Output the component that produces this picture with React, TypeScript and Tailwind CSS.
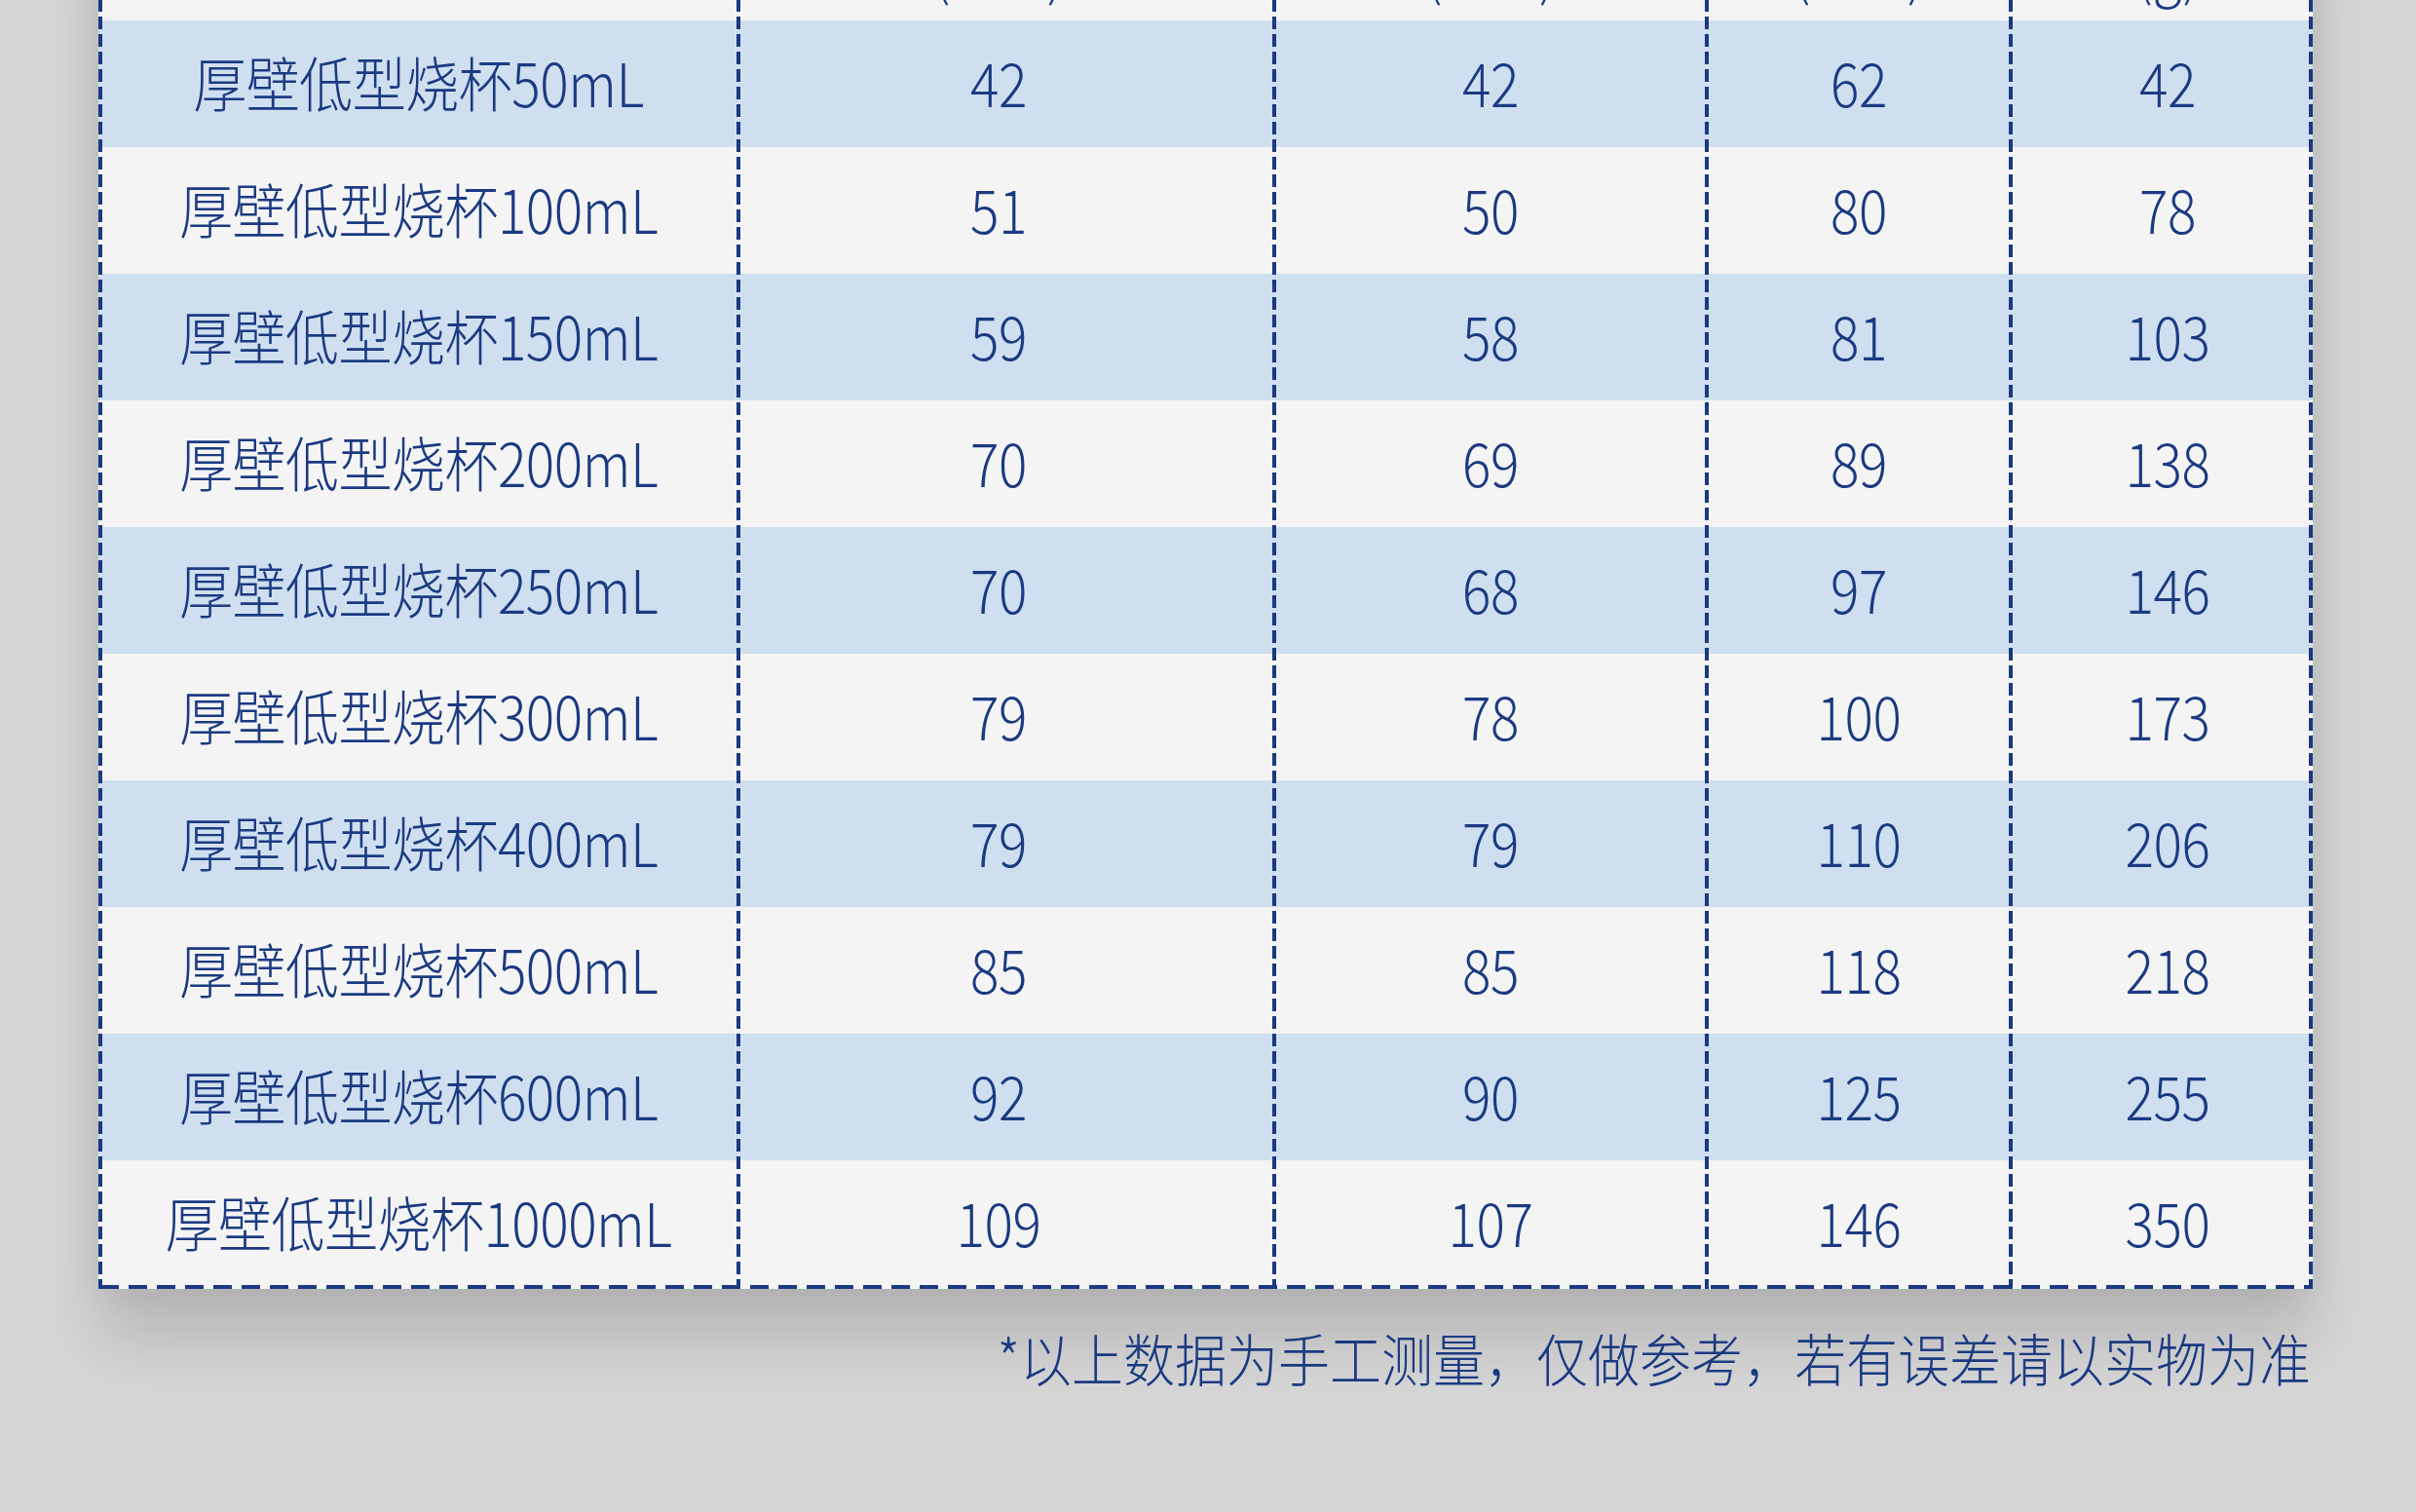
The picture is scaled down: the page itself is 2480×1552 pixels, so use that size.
import React from "react";

const rows: string[][] = [
  ["厚壁低型烧杯50mL", "42", "42", "62", "42"],
  ["厚壁低型烧杯100mL", "51", "50", "80", "78"],
  ["厚壁低型烧杯150mL", "59", "58", "81", "103"],
  ["厚壁低型烧杯200mL", "70", "69", "89", "138"],
  ["厚壁低型烧杯250mL", "70", "68", "97", "146"],
  ["厚壁低型烧杯300mL", "79", "78", "100", "173"],
  ["厚壁低型烧杯400mL", "79", "79", "110", "206"],
  ["厚壁低型烧杯500mL", "85", "85", "118", "218"],
  ["厚壁低型烧杯600mL", "92", "90", "125", "255"],
  ["厚壁低型烧杯1000mL", "109", "107", "146", "350"],
];

const header = ["", "(mm)", "(mm)", "(mm)", "(g)"];
const lineLefts = [0, 655, 1205, 1649, 1961, 2269];
const cellPad = ["", "pr-[16px]", "", "", "pl-[12px]"];

export default function App() {
  return (
    <div className="w-[2480px] h-[1552px] overflow-hidden bg-[#d6d6d6] font-['Noto_Sans_CJK_SC','Noto_Sans',sans-serif] text-[#1b3a82]">
      <div className="ml-[101px] w-[2273px] -mt-[109px] relative bg-[#f4f4f4] shadow-[0_55px_60px_rgba(0,0,0,0.14),0_0_35px_rgba(0,0,0,0.07)]">
        <div className="grid grid-cols-[657px_550px_444px_312px_310px] h-[130px] bg-[#f4f4f4]">
          {header.map((h, i) => (
            <div key={i} className={"flex items-end justify-center pb-[26px] " + cellPad[i]}>
              <span className="inline-block text-[55px] leading-none font-light scale-y-[1.12]">{h}</span>
            </div>
          ))}
        </div>
        {rows.map((r, ri) => (
          <div
            key={ri}
            className={
              "grid grid-cols-[657px_550px_444px_312px_310px] h-[130px] " +
              (ri % 2 === 0 ? "bg-[#cfdfef]" : "bg-[#f4f4f4]")
            }
          >
            {r.map((c, ci) => (
              <div key={ci} className={"flex items-center justify-center pb-[5px] " + cellPad[ci]}>
                <span className="inline-block text-[55px] leading-none font-light tracking-[-0.5px] scale-y-[1.12]">{c}</span>
              </div>
            ))}
          </div>
        ))}
        <div className="h-[4px] mx-[2px] -mt-[2px] bg-[repeating-linear-gradient(to_right,#1b3a82_0_19px,transparent_19px_29px)]" />
        {lineLefts.map((l, i) => (
          <div
            key={i}
            style={{ left: l }}
            className="absolute top-0 bottom-0 w-[4px] bg-[repeating-linear-gradient(to_bottom,#1a3980_0_13px,transparent_13px_18px)]"
          />
        ))}
      </div>
      <div className="w-[2372px] mt-[44px] flex justify-end">
        <span className="inline-block text-[53px] leading-none font-light scale-y-[1.1] origin-right">*以上数据为手工测量，仅做参考，若有误差请以实物为准</span>
      </div>
    </div>
  );
}
